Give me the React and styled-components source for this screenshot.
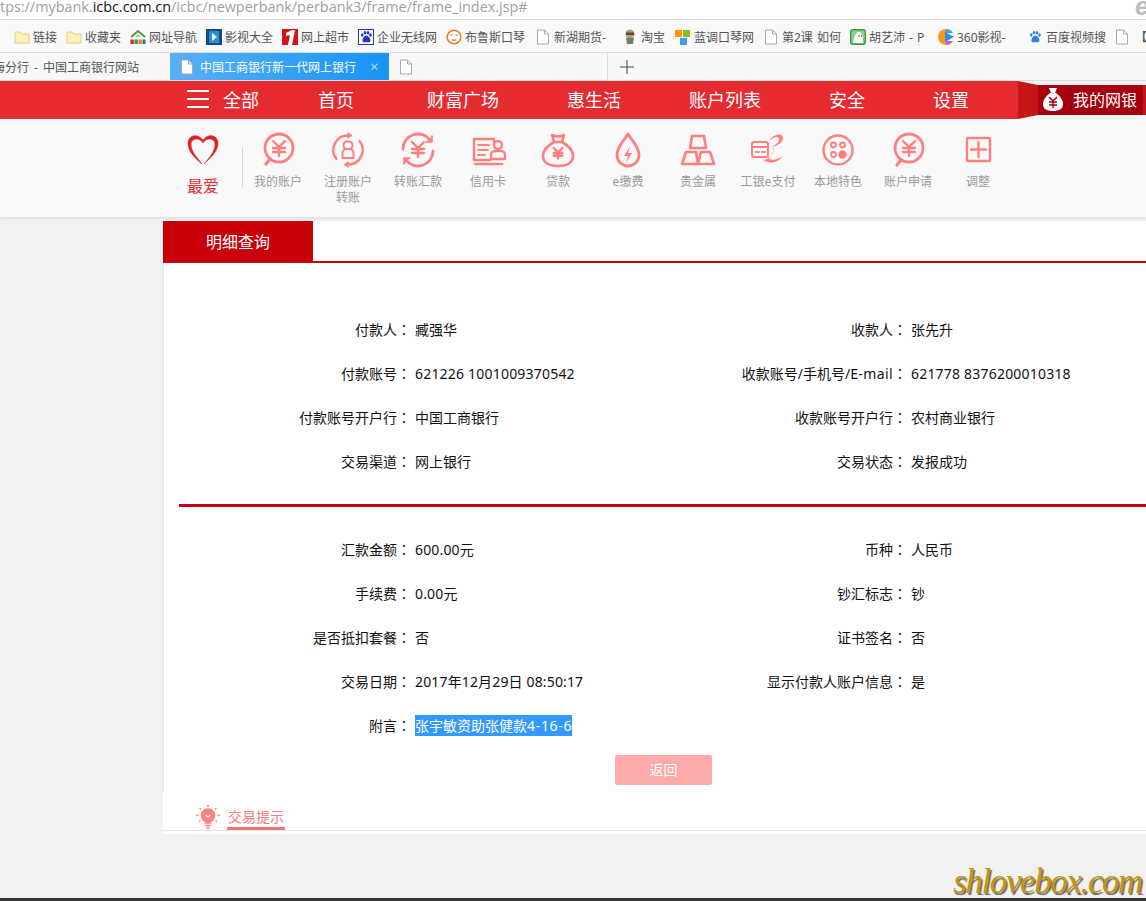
import React from "react";
import styled, { createGlobalStyle } from "styled-components";

const GlobalStyle = createGlobalStyle`
  html, body {
    margin: 0;
    padding: 0;
    height: 100%;
    overflow: hidden;
    background: #f1f1f1;
  }
  * { box-sizing: border-box; }
  #root { height: 100%; }
`;

const PINK = "#ff7f7f";
const CJK = `"Noto Sans", "Noto Sans CJK SC", sans-serif`;

const Page = styled.div`
  position: relative;
  height: 901px;
  display: flex;
  flex-direction: column;
  font-family: ${CJK};
  overflow: hidden;
  background: #f1f1f1;
`;

/* browser chrome */
const AddressBar = styled.div`
  height: 20px;
  flex: none;
  background: #fff;
  border-bottom: 1px solid #dcdcdc;
  display: flex;
  justify-content: space-between;
  overflow: hidden;
  font-family: "Open Sans", sans-serif;
  font-size: 14.4px;
  line-height: 14px;
  color: #a0a0a0;
  white-space: nowrap;
`;
const Domain = styled.span`
  color: #111;
`;
const IeMark = styled.span`
  font: italic bold 25px/13px "Liberation Sans", sans-serif;
  color: #bcbcbc;
  margin-right: -3px;
`;
const Bookmarks = styled.div`
  height: 33px;
  flex: none;
  padding: 1px 0 0 14px;
  display: flex;
  align-items: center;
  background: #f9f9f9;
  border-bottom: 1px solid #dcdcdc;
  overflow: hidden;
`;
const Bookmark = styled.div`
  flex: none;
  width: ${(p) => p.$w}px;
  display: flex;
  align-items: center;
  gap: 3px;
  font-size: 12px;
  color: #555;
  white-space: nowrap;
  word-spacing: 1px;
  svg { flex: none; }
`;
const TabStrip = styled.div`
  height: 28px;
  flex: none;
  display: flex;
  align-items: stretch;
  background: #f7f7f7;
  border-bottom: 1px solid #dcdcdc;
  font-size: 12px;
`;
const OldTab = styled.div`
  width: 170px;
  padding-right: 31px;
  display: flex;
  justify-content: flex-end;
  align-items: center;
  overflow: hidden;
  white-space: nowrap;
  word-spacing: 2px;
  color: #555;
`;
const ActiveTab = styled.div`
  width: 219px;
  padding: 0 0 0 9px;
  display: flex;
  align-items: center;
  gap: 5px;
  color: #fff;
  background: linear-gradient(90deg, #57b1f6, #1794f5);
`;
const CloseMark = styled.span`
  margin-left: 9px;
  font-size: 15px;
  font-weight: 300;
  line-height: 1;
  color: #e3f2fe;
`;
const BlankTab = styled.div`
  width: 219px;
  padding-left: 9px;
  display: flex;
  align-items: center;
  border-right: 1px solid #dcdcdc;
`;
const NewTab = styled.div`
  width: 38px;
  display: flex;
  align-items: center;
  justify-content: center;
`;

/* red nav */
const NavBar = styled.div`
  height: 38px;
  flex: none;
  display: flex;
  background: #f5f5f5;
`;
const NavMain = styled.nav`
  width: 1018px;
  padding: 0 0 2px 187px;
  display: flex;
  align-items: center;
  gap: 68px;
  background: #e62b30;
  color: #fff;
  font-size: 18px;
`;
const NavAll = styled.div`
  width: 72px;
  margin-right: -9px;
  display: flex;
  align-items: center;
  gap: 14px;
  white-space: nowrap;
`;
const NavLink = styled.span`
  white-space: nowrap;
  margin-right: ${(p) => p.$after || 0}px;
`;
const Burger = styled.span`
  flex: none;
  width: 22px;
  height: 18px;
  border-top: 2px solid #fff;
  border-bottom: 2px solid #fff;
  position: relative;
  &::after {
    content: "";
    position: absolute;
    left: 0;
    right: 0;
    top: 6px;
    height: 2px;
    background: #fff;
  }
`;
const Wedge = styled.div`
  width: 20px;
  background: #c41519;
  clip-path: polygon(0 0, 100% 10.5%, 100% 89.5%, 0 100%);
`;
const MyBank = styled.div`
  width: 105px;
  margin: 4px 0;
  padding: 0 0 2px 5px;
  display: flex;
  align-items: center;
  gap: 10px;
  background: #a4000d;
  color: #fff;
  font-size: 16px;
  white-space: nowrap;
`;
const NavEnd = styled.div`
  flex: 1;
  margin: 4px 0;
  background: #c41519;
`;

/* favourites row */
const IconBar = styled.div`
  height: 98px;
  flex: none;
  padding-left: 168px;
  display: flex;
  background: #f9f9f9;
  box-shadow: 0 1px 3px rgba(0, 0, 0, 0.1);
`;
const Shortcut = styled.div`
  width: 70px;
  padding-top: 12px;
  display: flex;
  flex-direction: column;
  align-items: center;
  text-align: center;
  font-size: 12px;
  line-height: 16px;
  color: #999;
`;
const ShortcutLabel = styled.div`
  width: 56px;
  margin-top: 5px;
`;
const FavLabel = styled.div`
  margin-top: 6px;
  font-size: 16px;
  line-height: 22px;
  color: #e62b30;
`;
const Separator = styled.div`
  width: 1px;
  height: 40px;
  margin: 28px 0 0 4px;
  background: #d8d8d8;
`;

/* detail panel */
const Main = styled.main`
  flex: 1;
  margin: 4px 0 0 163px;
  display: flex;
  flex-direction: column;
`;
const TabHead = styled.div`
  height: 42px;
  flex: none;
  background: #fff;
  border-bottom: 2px solid #d5000f;
`;
const TabTitle = styled.div`
  width: 150px;
  height: 42px;
  padding-bottom: 3px;
  display: flex;
  align-items: center;
  justify-content: center;
  background: #c9000a;
  color: #fff;
  font-size: 16px;
`;
const Panel = styled.section`
  height: 529px;
  flex: none;
  padding-top: 45px;
  background: #fff;
  border-left: 1px solid #e8e8e8;
`;
const Grid = styled.div`
  display: grid;
  grid-template-columns: 247px 4px 326px 166px 4px 1fr;
  grid-auto-rows: 44px;
  align-items: center;
  font-size: 14px;
  color: #111;
`;
const Label = styled.div`
  padding-bottom: 2px;
  text-align: right;
  white-space: nowrap;
`;
const Colon = styled.span`
  font-family: "Noto Sans CJK TC", sans-serif;
`;
const Value = styled.div`
  grid-column: ${(p) => p.$col};
  padding-bottom: 2px;
  white-space: nowrap;
`;
const Track = styled.span`
  letter-spacing: ${(p) => p.$by}px;
`;
const Selected = styled.span`
  display: inline-block;
  line-height: 21px;
  background: #3399ff;
  color: #fff;
`;
const Divider = styled.div`
  height: 3px;
  margin: 20px 0 21px 15px;
  background: #c9000a;
`;
const ReturnRow = styled.div`
  margin: 7px 0 0 451px;
`;
const ReturnButton = styled.button`
  width: 97px;
  height: 30px;
  padding: 0 0 2px;
  border: 0;
  border-radius: 2px;
  background: #fdaaaa;
  color: #fff;
  font-family: inherit;
  font-size: 14px;
`;
const Tips = styled.div`
  height: 42px;
  flex: none;
  padding-top: 13px;
  background: #fff;
`;
const TipsLine = styled.div`
  height: 26px;
  padding-left: 33px;
  display: flex;
  align-items: flex-start;
  gap: 7px;
  border-bottom: 1px solid #e5e5e5;
`;
const TipsTitle = styled.div`
  width: 58px;
  height: 25px;
  border-bottom: 3px solid #ec7575;
  color: #f08080;
  font-size: 14px;
  line-height: 23px;
  text-align: center;
  white-space: nowrap;
`;
const BottomEdge = styled.div`
  height: 3px;
  flex: none;
  background: #333;
`;
const Watermark = styled.div`
  position: absolute;
  right: 4px;
  bottom: 0;
  font: italic 35px/38px "Liberation Serif", serif;
  letter-spacing: -1.4px;
  color: #c4960c;
  text-shadow: 1.5px 1.5px 1px #666;
`;

/* small browser favicons */
const Fav = ({ children }) => (
  <svg width="16" height="16" viewBox="0 0 16 16">
    {children}
  </svg>
);
const Folder = () => (
  <Fav>
    <path d="M1 3h5l1.500 2H15v9H1z" fill="#fdf0b8" stroke="#e3cb86" />
  </Fav>
);
const Doc = ({ stroke = "#aaa", fill = "#fff" }) => (
  <Fav>
    <path d="M2.500 1h7l4 4v10h-11z" fill={fill} stroke={stroke} />
    <path d="M9.500 1v4h4" fill="none" stroke={stroke} />
  </Fav>
);
const Paw = ({ color }) => (
  <g fill={color}>
    <ellipse cx="4.200" cy="6" rx="1.300" ry="1.800" />
    <ellipse cx="7" cy="3.800" rx="1.300" ry="1.800" />
    <ellipse cx="10" cy="3.800" rx="1.300" ry="1.800" />
    <ellipse cx="12.500" cy="6" rx="1.300" ry="1.800" />
    <path d="M8.400 6.500c2 0 4 3 4 5 0 2-2 2-4 1.500-2 .5-4 .5-4-1.500 0-2 2-5 4-5z" />
  </g>
);
const favicons = {
  folder: <Folder />,
  doc: <Doc />,
  nav2345: (
    <Fav>
      <path d="M1 8l7-6 7 6" fill="none" stroke="#4d9a3f" strokeWidth="2" />
      <path d="M5 8l3-3 3 3z" fill="#9ccf7c" />
      <rect x="0.500" y="10.500" width="3.300" height="4.500" fill="#d8262c" />
      <rect x="4.500" y="10.500" width="3.300" height="4.500" fill="#2f9e44" />
      <rect x="8.500" y="10.500" width="3.300" height="4.500" fill="#e08a1a" />
      <rect x="12.500" y="10.500" width="3" height="4.500" fill="#2a6fc4" />
    </Fav>
  ),
  video: (
    <Fav>
      <rect width="16" height="16" fill="#0e4f8a" />
      <rect x="3" y="2" width="10" height="12" fill="#2f8fd6" />
      <path d="M6 4l5 4-5 4z" fill="#e8f6ff" />
    </Fav>
  ),
  one: (
    <Fav>
      <rect width="16" height="16" fill="#d2141b" />
      <path d="M4 4l6-3h3l-3 15H6l2-10-4 1z" fill="#fff" />
    </Fav>
  ),
  paw: (
    <Fav>
      <rect x="0.500" y="0.500" width="15" height="15" fill="#fff" stroke="#2932c8" />
      <Paw color="#2932c8" />
    </Fav>
  ),
  smile: (
    <Fav>
      <circle cx="8" cy="8" r="6.800" fill="#fff" stroke="#ee7a22" strokeWidth="1.600" />
      <path d="M4.500 6.500l2-1M9.500 5.500l2 1M6 10.500c1 1.200 3 1.200 4 0" fill="none" stroke="#ee7a22" strokeWidth="1.300" />
    </Fav>
  ),
  taobao: (
    <Fav>
      <circle cx="8" cy="5" r="4.500" fill="#b59a75" />
      <rect x="4" y="3.500" width="8" height="2.500" fill="#5a4b3a" />
      <path d="M4 9h8l-1 6H5z" fill="#6f8068" />
    </Fav>
  ),
  blocks: (
    <Fav>
      <rect x="0" y="1" width="7" height="7" fill="#ff9400" />
      <rect x="8" y="1" width="7" height="7" fill="#7fc31c" />
      <rect x="5" y="9" width="7" height="7" fill="#3f9af2" />
    </Fav>
  ),
  ghost: (
    <Fav>
      <rect x="0.700" y="0.700" width="14.600" height="14.600" rx="2" fill="#8fce8a" stroke="#3f9a46" strokeWidth="1.400" />
      <path d="M3 14c1-6 3-11 6-11s4 4 4 11z" fill="#fff" />
      <circle cx="9" cy="7" r="0.700" fill="#333" />
      <circle cx="11.500" cy="7" r="0.700" fill="#333" />
    </Fav>
  ),
  play360: (
    <Fav>
      <path d="M8 0a8 8 0 0 0 0 16z" fill="#f59a1b" />
      <path d="M8 0a8 8 0 0 1 7 4H8z" fill="#2aa7e8" />
      <path d="M8 16a8 8 0 0 0 7-4H8z" fill="#c85be0" />
      <path d="M7 3l9 5-9 5z" fill="#2f8ff0" />
    </Fav>
  ),
  baidu: (
    <Fav>
      <Paw color="#2f7fe6" />
    </Fav>
  ),
};

const bookmarks = [
  ["folder", "链接", 52],
  ["folder", "收藏夹", 64],
  ["nav2345", "网址导航", 76],
  ["video", "影视大全", 76],
  ["one", "网上超市", 76],
  ["paw", "企业无线网", 88],
  ["smile", "布鲁斯口琴", 89],
  ["doc", "新湖期货-", 87],
  ["taobao", "淘宝", 53],
  ["blocks", "蓝调口琴网", 88],
  ["doc", "第2课 如何", 87],
  ["ghost", "胡艺沛 - P", 88],
  ["play360", "360影视-", 89],
  ["baidu", "百度视频搜", 87],
  ["doc", "", 21],
];

/* shortcut icons */
const Line = ({ children, w = 2.4 }) => (
  <svg width="38" height="38" viewBox="0 0 38 38" fill="none" stroke={PINK} strokeWidth={w} strokeLinecap="round" strokeLinejoin="round">
    {children}
  </svg>
);
const Yen = ({ x = 20, y = 17, s = 1 }) => (
  <path
    transform={`translate(${x} ${y}) scale(${s})`}
    d="M-6-7l6 6 6-6M-6 0H6M-6 4H6M0-1V8"
    strokeWidth={2.4 / s}
  />
);
const Heart = () => (
  <svg width="38" height="38" viewBox="0 0 38 38">
    <path
      d="M18 33C11 27 4 21 4 12 4 4 14 2 19 9c5-7 15-5 15 3 0 9-8 15-14 21 5-6 11-12 11-20 0-6-9-7-12-1-3-6-12-5-12 1 0 8 6 13 11 20z"
      fill="#dc2228"
      stroke="#dc2228"
      strokeWidth="0.600"
      strokeLinejoin="round"
    />
  </svg>
);
const MyAccountIcon = () => (
  <Line w={2.8}>
    <circle cx="20" cy="17" r="14" />
    <path d="M11 28l-4 5" strokeWidth="3.200" />
    <Yen />
  </Line>
);
const RegisterIcon = () => (
  <Line>
    <path d="M7.500 28A14.500 14.500 0 0 1 19 4.500M30.500 10a14.500 14.500 0 0 1-11.500 23.500" />
    <path d="M19 2l4 2.500-4 2.500zM19 31l-4 2.500 4 2.500z" fill={PINK} strokeWidth="1" />
    <rect x="14.500" y="10.500" width="9" height="7.500" rx="3.500" strokeWidth="2" />
    <path d="M13.500 27v-5a4 4 0 0 1 4-4h3a4 4 0 0 1 4 4v5z" strokeWidth="2" />
  </Line>
);
const TransferIcon = () => (
  <Line w={2.8}>
    <path d="M4 18A15 15 0 0 1 31 9M34 20A15 15 0 0 1 7 29" />
    <path d="M33 5v6h-6M5 33v-6h6" fill={PINK} strokeWidth="1.600" />
    <Yen x={19} y={18} />
  </Line>
);
const CardIcon = () => (
  <Line>
    <path d="M21 29H5V8h20v3M33 33H6" />
    <path d="M9 14h11M9 19h10M9 24h7" strokeWidth="1.800" />
    <circle cx="29" cy="14" r="4" />
    <path d="M22 28v-4a4 4 0 0 1 4-4h6a4 4 0 0 1 4 4v4z" />
  </Line>
);
const LoanIcon = () => (
  <Line w={2.6}>
    <path d="M13 4c4 2 8 2 12 0l-2 7h-8z" />
    <path d="M15 11C8 15 4 20 4 25c0 6 5 10 15 10s15-4 15-10c0-5-4-10-11-14" />
    <Yen x={19} y={22} s={0.7} />
  </Line>
);
const PayIcon = () => (
  <Line w={2.8}>
    <path d="M19 3c5 8 11 13 11 21a11 11 0 0 1-22 0C8 16 14 11 19 3z" />
    <path d="M21 15l-6 10h4l-2 7 6-10h-4z" fill={PINK} stroke="none" />
  </Line>
);
const MetalIcon = () => (
  <Line w={2.6}>
    <path d="M13 5h12l2 12H11z" />
    <path d="M7 21h10l2 12H3zM22 21h9l4 12H19z" />
  </Line>
);
const EPayIcon = () => (
  <Line w={2}>
    <rect x="3" y="11" width="16" height="15" rx="2" />
    <path d="M3 16h16M7 21h3M13 21h3" />
    <path d="M20 10C24 3 34 1 34 7c0 5-6 8-12 9 3-1 8-4 8-8 0-3-5-3-10 2z" fill={PINK} stroke="none" />
    <path d="M23 16c3 1 2 3 0 6l-3 6c5 2 9 0 14-3-3 4-9 8-15 6-2-1-4-1-5-2 3 0 6-2 8-5 3-3 3-6 1-8z" fill={PINK} stroke="none" />
  </Line>
);
const LocalIcon = () => (
  <Line>
    <circle cx="19" cy="19" r="14.500" />
    <circle cx="14.500" cy="14" r="2.500" strokeWidth="1.800" />
    <circle cx="23.500" cy="14" r="2.500" strokeWidth="1.800" />
    <circle cx="14.500" cy="23.500" r="2.500" strokeWidth="1.800" />
    <circle cx="23.500" cy="23.500" r="3" fill={PINK} />
  </Line>
);
const ApplyIcon = () => (
  <Line w={2.8}>
    <circle cx="20" cy="17" r="14" />
    <path d="M12 29l-4 5" strokeWidth="3.200" />
    <Yen />
  </Line>
);
const AdjustIcon = () => (
  <Line w={2.4}>
    <rect x="8" y="7" width="23" height="23" rx="1" />
    <path d="M19.500 11v15M12 18.500h15" />
  </Line>
);
const BagIcon = () => (
  <svg width="20" height="24" viewBox="0 0 20 24">
    <path d="M6 1h8l-2 5h-4z" fill="#fff" />
    <path d="M7 6h6c4 3 7 7 7 11 0 5-4 7-10 7S0 22 0 17c0-4 3-8 7-11z" fill="#fff" />
    <path d="M6 10l4 4 4-4M6 15h8M6 18h8M10 14v7" fill="none" stroke="#a4000d" strokeWidth="1.500" />
  </svg>
);
const BulbIcon = () => (
  <svg width="24" height="24" viewBox="0 0 24 24" fill="none" stroke={PINK} strokeWidth="1.500">
    <circle cx="12" cy="10.500" r="6.500" fill={PINK} />
    <path d="M12 0v2M3.500 3l1.500 1.500M20.500 3L19 4.500M0 10.500h2.500M21.500 10.500H24M3 17l1.500-1.500M21 17l-1.500-1.500" />
    <path d="M8.500 18h7M9 20.500h6M10.500 23h3" strokeWidth="1.600" />
    <path d="M9.500 10l2.500 2 2.500-2" stroke="#fff" />
  </svg>
);

const shortcuts = [
  [MyAccountIcon, "我的账户"],
  [RegisterIcon, "注册账户转账"],
  [TransferIcon, "转账汇款"],
  [CardIcon, "信用卡"],
  [LoanIcon, "贷款"],
  [PayIcon, "e缴费"],
  [MetalIcon, "贵金属"],
  [EPayIcon, "工银e支付"],
  [LocalIcon, "本地特色"],
  [ApplyIcon, "账户申请"],
  [AdjustIcon, "调整"],
];

const partyRows = [
  ["付款人", "臧强华", "收款人", "张先升"],
  [
    "付款账号",
    <Track $by={0.2}>621226 1001009370542</Track>,
    <>
      收款账号/手机号/<Track $by={0.4}>E-mail</Track>
    </>,
    <Track $by={0.2}>621778 8376200010318</Track>,
  ],
  ["付款账号开户行", "中国工商银行", "收款账号开户行", "农村商业银行"],
  ["交易渠道", "网上银行", "交易状态", "发报成功"],
];
const amountRows = [
  ["汇款金额", <Track $by={0.15}>600.00元</Track>, "币种", "人民币"],
  ["手续费", <Track $by={0.15}>0.00元</Track>, "钞汇标志", "钞"],
  ["是否抵扣套餐", "否", "证书签名", "否"],
  ["交易日期", <Track $by={0.15}>2017年12月29日 08:50:17</Track>, "显示付款人账户信息", "是"],
];

const DetailRows = ({ rows }) => (
  <Grid>
    {rows.map(([a, b, c, d], i) => (
      <React.Fragment key={i}>
        <Label>
          {a}
          <Colon>：</Colon>
        </Label>
        <Value $col={3}>{b}</Value>
        <Label>
          {c}
          <Colon>：</Colon>
        </Label>
        <Value $col={6}>{d}</Value>
      </React.Fragment>
    ))}
  </Grid>
);

const App = () => {
  return (
    <Page>
      <GlobalStyle />
      <AddressBar>
        <span>
          tps://mybank.<Domain>icbc.com.cn</Domain>/icbc/newperbank/perbank3/frame/frame_index.jsp#
        </span>
        <IeMark>e</IeMark>
      </AddressBar>
      <Bookmarks>
        {bookmarks.map(([icon, text, w], i) => (
          <Bookmark key={i} $w={w}>
            {favicons[icon]}
            {text}
          </Bookmark>
        ))}
        <Bookmark $w={10}>【</Bookmark>
      </Bookmarks>
      <TabStrip>
        <OldTab>海分行 - 中国工商银行网站</OldTab>
        <ActiveTab>
          <Doc />
          中国工商银行新一代网上银行
          <CloseMark>×</CloseMark>
        </ActiveTab>
        <BlankTab>
          <Doc />
        </BlankTab>
        <NewTab>
          <svg width="14" height="14" viewBox="0 0 14 14" stroke="#444" strokeWidth="1">
            <path d="M7 0v14M0 7h14" />
          </svg>
        </NewTab>
      </TabStrip>
      <NavBar>
        <NavMain>
          <NavAll>
            <Burger />
            全部
          </NavAll>
          <NavLink $after={5}>首页</NavLink>
          <NavLink>财富广场</NavLink>
          <NavLink>惠生活</NavLink>
          <NavLink>账户列表</NavLink>
          <NavLink>安全</NavLink>
          <NavLink>设置</NavLink>
        </NavMain>
        <Wedge />
        <MyBank>
          <BagIcon />
          我的网银
        </MyBank>
        <NavEnd />
      </NavBar>
      <IconBar>
        <Shortcut>
          <Heart />
          <FavLabel>最爱</FavLabel>
        </Shortcut>
        <Separator />
        {shortcuts.map(([Icon, text]) => (
          <Shortcut key={text}>
            <Icon />
            <ShortcutLabel>{text}</ShortcutLabel>
          </Shortcut>
        ))}
      </IconBar>
      <Main>
        <TabHead>
          <TabTitle>明细查询</TabTitle>
        </TabHead>
        <Panel>
          <DetailRows rows={partyRows} />
          <Divider />
          <DetailRows rows={amountRows} />
          <Grid>
            <Label>
              附言<Colon>：</Colon>
            </Label>
            <Value $col={3}>
              <Selected>
                张宇敏资助张健款<Track $by={0.7}>4-16-6</Track>
              </Selected>
            </Value>
          </Grid>
          <ReturnRow>
            <ReturnButton>返回</ReturnButton>
          </ReturnRow>
        </Panel>
        <Tips>
          <TipsLine>
            <BulbIcon />
            <TipsTitle>交易提示</TipsTitle>
          </TipsLine>
        </Tips>
      </Main>
      <BottomEdge />
      <Watermark>shlovebox.com</Watermark>
    </Page>
  );
};

export default App;
